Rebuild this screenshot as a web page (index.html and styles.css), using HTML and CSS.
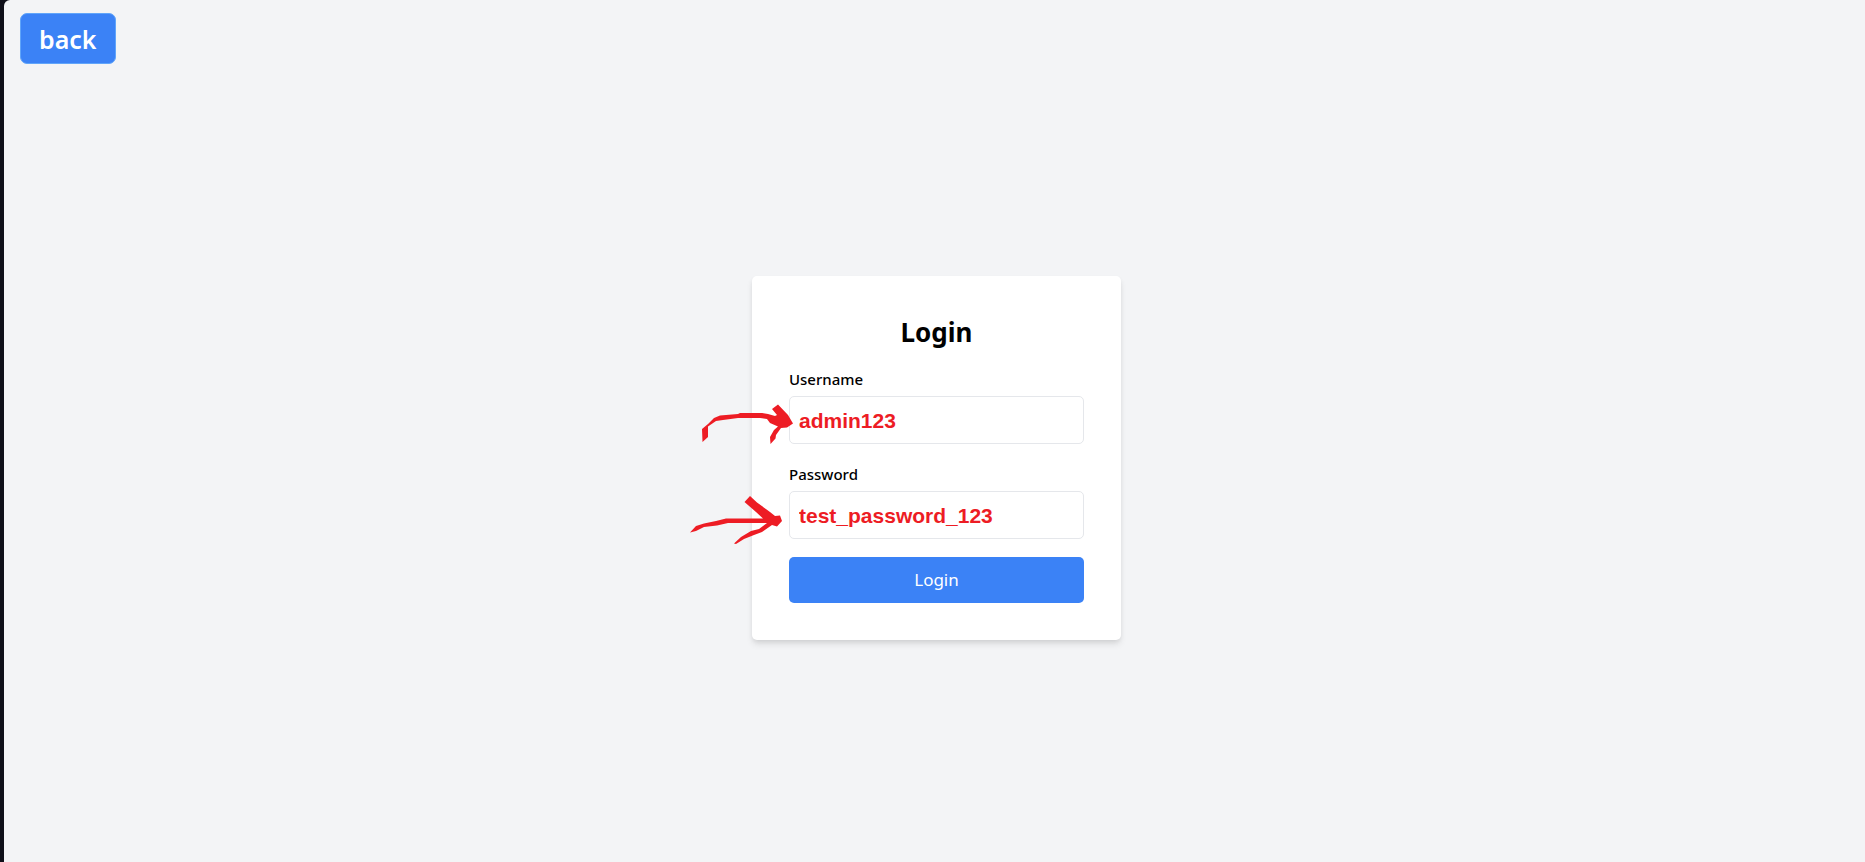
FILE: index.html
```html
<!DOCTYPE html>
<html lang="en">
<head>
<meta charset="utf-8">
<title>Login</title>
<link rel="stylesheet" href="styles.css">
</head>
<body>
<div class="page">
  <header class="topbar">
    <button class="back" type="button">back</button>
  </header>
  <main class="content">
    <form class="card">
      <h1 class="title">Login</h1>
      <div class="field">
        <label class="label" for="username">Username</label>
        <input class="input" id="username" type="text" value="admin123">
        <svg class="arrow" viewBox="0 -5 130 70" width="130" height="70" aria-hidden="true">
          <path d="M22 34 28 29 34 23 40 20.500 58 19 60 18 82 18 88 19 95 21 97 20 92 14 98 9.500 108 20 113 28.500 107 32.500 101 33 96 40 95.500 43.500 90.500 49 90 42 94 35 98 31.500 90 28 87 24 80 23 58 23 43 25 36 26 28 31.500 28 42 22.500 47Z"/>
        </svg>
      </div>
      <div class="field">
        <label class="label" for="password">Password</label>
        <input class="input" id="password" type="text" value="test_password_123">
        <svg class="arrow" viewBox="0 0 130 70" width="130" height="70" aria-hidden="true">
          <path d="M10 47.500 16 41 24 38.500 36 36 46 33.500 83 33.500 76 27 64.500 17 70 11 77 17.500 90 27 95 31 100 30.500 102 36 97 41.500 92 40 82 47 74 50 64 54 56 59 54 58.500 61 52 71 46 79 44 87 38 48 38 37 40.500 24 42 16 46Z"/>
        </svg>
      </div>
      <button class="submit" type="submit">Login</button>
    </form>
  </main>
</div>
</body>
</html>
```
FILE: styles.css
```css
* {
  box-sizing: border-box;
}

body {
  margin: 0;
  padding-left: 4px;
  background: #0e0f19;
  font-family: "Segoe UI", "Noto Sans", sans-serif;
  color: #000;
}

.page {
  display: flex;
  flex-direction: column;
  min-height: 100vh;
  background: #f3f4f6;
  border-top-left-radius: 6px;
}

.topbar {
  height: 54px;
  padding: 13px 16px 0;
}

.back {
  height: 51px;
  padding: 0 18px;
  border: 1px solid #60a5fa;
  border-radius: 7px;
  background: #3b82f6;
  color: #fff;
  font: 600 25px/36px "Segoe UI", "Noto Sans", sans-serif;
}

.content {
  flex: 1;
  display: flex;
  align-items: center;
  justify-content: center;
  padding-left: 4px;
}

.card {
  width: 369px;
  padding: 37px;
  border-radius: 5px;
  background: #fff;
  box-shadow: 0 5px 7px -1px rgba(0, 0, 0, 0.1), 0 2px 5px -1px rgba(0, 0, 0, 0.08);
}

.title {
  margin: 0 0 16px;
  font-size: 26px;
  line-height: 38px;
  font-weight: 700;
  text-align: center;
}

.field {
  position: relative;
  margin-bottom: 18px;
}

.label {
  display: block;
  margin-bottom: 5px;
  font-size: 15px;
  line-height: 24px;
  font-weight: 500;
}

.input {
  display: block;
  width: 100%;
  height: 48px;
  padding: 2px 9px 0;
  border: 1px solid #e5e7eb;
  border-radius: 5px;
  background: #fff;
  color: #ed1c24;
  font: 700 21px/28px "Liberation Sans", Arial, sans-serif;
}

.arrow {
  position: absolute;
  left: -109px;
  top: 23px;
  fill: #ed1c24;
}

.submit {
  display: block;
  width: 100%;
  height: 46px;
  padding: 0;
  border: 0;
  border-radius: 5px;
  background: #3b82f6;
  color: #fff;
  font: 400 17px/28px "Segoe UI", "Noto Sans", sans-serif;
}
```
